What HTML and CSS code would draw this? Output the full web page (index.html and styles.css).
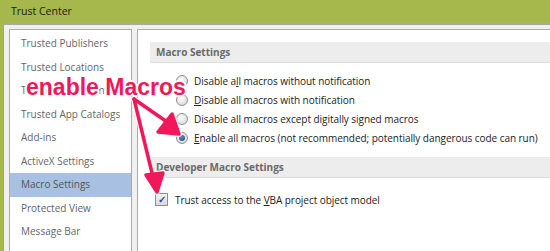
FILE: index.html
```html
<!DOCTYPE html>
<html lang="en">

<head>
    <meta charset="UTF-8" />
    <title>Trust Center</title>
    <link rel="stylesheet" href="styles.css">
</head>

<body>
    <div class="window">
        <div class="titlebar">Trust Center</div>
        <div class="frame">
            <div class="content">
                <ul class="nav">
                    <li>Trusted Publishers</li>
                    <li>Trusted Locations</li>
                    <li>Trusted Documents</li>
                    <li>Trusted App Catalogs</li>
                    <li>Add-ins</li>
                    <li>ActiveX Settings</li>
                    <li class="active">Macro Settings</li>
                    <li>Protected View</li>
                    <li>Message Bar</li>
                </ul>

                <div class="panel">
                    <div class="section-head">Macro Settings</div>
                    <div class="options">
                        <label class="option"><span class="radio"></span><span>Disable a<u>l</u>l macros without notification</span></label>
                        <label class="option"><span class="radio"></span><span><u>D</u>isable all macros with notification</span></label>
                        <label class="option"><span class="radio"></span><span>Disable all macros except di<u>g</u>itally signed macros</span></label>
                        <label class="option"><span class="radio checked"></span><span><u>E</u>nable all macros (not recommended; potentially dangerous code can run)</span></label>
                    </div>

                    <div class="section-head">Developer Macro Settings</div>
                    <div class="options">
                        <label class="option check-row"><span class="checkbox">&#10003;</span><span>Trust access to the <u>V</u>BA project object model</span></label>
                    </div>
                </div>
            </div>
        </div>
    </div>

    <!-- annotation drawn over the screenshot -->
    <div class="callout">enable Macros</div>
    <svg class="arrows" width="550" height="251" viewBox="0 0 550 251">
        <g stroke="#fff" stroke-width="6" fill="#fff" stroke-linejoin="round" stroke-linecap="round" opacity="0.9">
            <line x1="134" y1="99" x2="170" y2="124" />
            <line x1="134" y1="99" x2="153" y2="177" />
            <polygon points="179,134 158,132 172,114" />
            <polygon points="157,192 146,175 163,173" />
        </g>
        <g stroke="#f0185a" stroke-width="3.5" fill="#f0185a" stroke-linejoin="round" stroke-linecap="round">
            <line x1="134" y1="99" x2="170" y2="124" />
            <line x1="134" y1="99" x2="153" y2="177" />
            <polygon points="179,134 158,132 172,114" />
            <polygon points="157,192 146,175 163,173" />
        </g>
    </svg>
</body>

</html>
```

FILE: styles.css
```css
body {
    margin: 0;
    width: 550px;
    height: 251px;
    overflow: hidden;
    font-family: "Open Sans", "Noto Sans", sans-serif;
    font-size: 10px;
    color: #222;
    position: relative;
}

.window {
    background: #a6b74b;
    height: 251px;
    display: flex;
    flex-direction: column;
}

.titlebar {
    height: 23px;
    line-height: 22px;
    padding-left: 11px;
    font-size: 10.5px;
    color: #1a1a1a;
}

.frame {
    flex: 1;
    margin-left: 3px;
    border-top: 2px solid #a8a8a8;
    border-left: 1px solid #a0a0a0;
    background: #f0f0f0;
    padding: 4px 0 0 5px;
}

.content {
    display: flex;
    gap: 5px;
    height: 100%;
}

.nav {
    list-style: none;
    margin: 0;
    padding: 2px 0 0 0;
    width: 121px;
    background: #fff;
    border: 1px solid #ababab;
    border-bottom: none;
    color: #666;
    font-size: 10px;
}

.nav li {
    height: 23.5px;
    line-height: 23.5px;
    padding-left: 11px;
    white-space: nowrap;
}

.nav li.active {
    background: #a8c1e2;
    color: #555;
}

.panel {
    flex: 1;
    background: #fff;
    border: 1px solid #ababab;
    border-right: none;
    border-bottom: none;
    padding-top: 12px;
    padding-left: 12px;
}

.section-head {
    background: #ededed;
    border-bottom: 1px solid #dcdcdc;
    height: 20px;
    line-height: 20px;
    padding-left: 6px;
    font-weight: bold;
    color: #6a6a6a;
    font-size: 10px;
}

.options {
    padding: 8px 0 10px 26px;
}

.option {
    display: flex;
    align-items: center;
    height: 19px;
    white-space: nowrap;
    color: #222;
    letter-spacing: -0.05px;
}

.radio {
    width: 10px;
    height: 10px;
    border-radius: 50%;
    border: 1px solid #8e8e8e;
    background: radial-gradient(circle at 40% 35%, #fdfdfd, #d2d2d2);
    margin-right: 6px;
    position: relative;
    flex-shrink: 0;
}

.radio.checked::after {
    content: "";
    position: absolute;
    left: 2px;
    top: 2px;
    width: 6px;
    height: 6px;
    border-radius: 50%;
    background: radial-gradient(circle at 40% 35%, #6a8fc7, #1c3f7a);
}

.check-row {
    margin-left: -21px;
    margin-top: 4px;
}

.checkbox {
    width: 11px;
    height: 11px;
    border: 1px solid #8e8e8e;
    background: linear-gradient(#f4f4f4, #dadada);
    margin-right: 7px;
    font-size: 10px;
    line-height: 11px;
    text-align: center;
    color: #2a4f9c;
    font-weight: bold;
}

.callout {
    position: absolute;
    left: 26px;
    top: 74px;
    font-family: "Liberation Sans", Arial, sans-serif;
    font-weight: bold;
    font-size: 23px;
    color: #f0185a;
    text-shadow: -1px -1px 0 #fff, 1px -1px 0 #fff, -1px 1px 0 #fff, 1px 1px 0 #fff,
        0 2px 0 #fff, 0 -2px 0 #fff, 2px 0 0 #fff, -2px 0 0 #fff;
}

.arrows {
    position: absolute;
    left: 0;
    top: 0;
}
```
